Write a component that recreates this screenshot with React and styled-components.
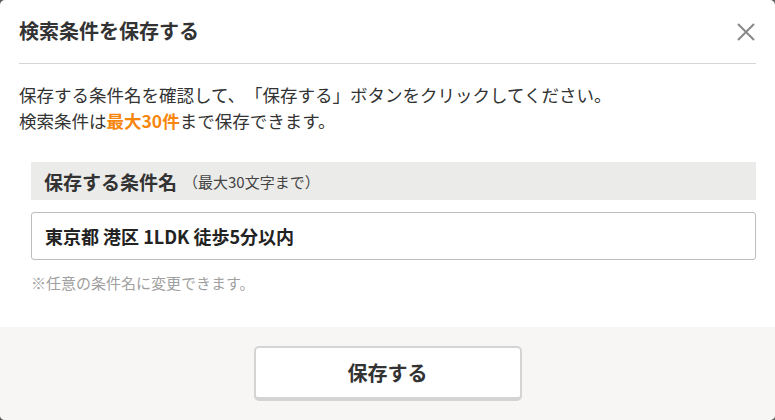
import React from "react";
import styled, { createGlobalStyle } from "styled-components";

const Global = createGlobalStyle`
  html, body { margin: 0; padding: 0; background: #5a5a5a; }
  body { font-family: "Noto Sans CJK JP", "Noto Sans", sans-serif; color: #333; }
  * { box-sizing: border-box; text-spacing-trim: space-all; }
`;

const Modal = styled.div`
  width: 775px;
  height: 420px;
  background: #fff;
  border-radius: 5px;
  overflow: hidden;
  display: flex;
  flex-direction: column;
`;

const Header = styled.div`
  margin: 0 19px;
  height: 64px;
  border-bottom: 1px solid #d6d6d6;
  display: flex;
  align-items: center;
  justify-content: space-between;
`;

const Title = styled.h2`
  margin: 0;
  font-size: 20px;
  font-weight: 700;
  color: #333;
  line-height: 1;
  padding-bottom: 1px;
`;

const Close = styled.button`
  width: 20px;
  height: 20px;
  padding: 0;
  border: none;
  background: none;
  display: flex;
  align-items: center;
  justify-content: center;
  cursor: pointer;
`;

const Body = styled.div`
  padding: 18px 19px 0;
  flex: 1;
`;

const Desc = styled.p`
  margin: 0;
  font-size: 17.5px;
  line-height: 26px;
  color: #333;
`;

const Em = styled.strong`
  color: #f7860e;
  font-weight: 700;
`;

const Field = styled.div`
  margin: 28px 0 0 12px;
`;

const LabelBar = styled.div`
  height: 38px;
  background: #ebebe9;
  display: flex;
  align-items: center;
  padding-left: 13px;
  gap: 6px;
`;

const LabelText = styled.span`
  font-size: 19px;
  font-weight: 700;
  color: #333;
`;

const LabelNote = styled.span`
  font-size: 15px;
  color: #444;
`;

const Input = styled.input`
  display: block;
  width: 100%;
  height: 48px;
  margin-top: 12px;
  border: 1px solid #bdbdbd;
  border-radius: 3px;
  padding: 0 13px;
  font-family: inherit;
  font-size: 18px;
  font-weight: 700;
  color: #222;
  outline: none;
`;

const Hint = styled.p`
  margin: 13px 0 0;
  font-size: 15px;
  line-height: 20px;
  color: #a0a0a0;
`;

const Footer = styled.div`
  height: 93px;
  background: #f7f6f4;
  display: flex;
  justify-content: center;
  padding-top: 19px;
`;

const SaveButton = styled.button`
  width: 268px;
  height: 55px;
  background: #fff;
  border: 2px solid #d4d4d4;
  border-bottom-width: 4px;
  border-radius: 5px;
  font-family: inherit;
  font-size: 20px;
  font-weight: 700;
  color: #333;
  cursor: pointer;
`;

export default function App() {
  return (
    <>
      <Global />
      <Modal>
        <Header>
          <Title>検索条件を保存する</Title>
          <Close aria-label="閉じる">
            <svg width="18" height="18" viewBox="0 0 18 18">
              <path d="M1 1L17 17M17 1L1 17" stroke="#888" strokeWidth="2" />
            </svg>
          </Close>
        </Header>
        <Body>
          <Desc>
            保存する条件名を確認して、「保存する」ボタンをクリックしてください。
            <br />
            検索条件は<Em>最大30件</Em>まで保存できます。
          </Desc>
          <Field>
            <LabelBar>
              <LabelText>保存する条件名</LabelText>
              <LabelNote>（最大30文字まで）</LabelNote>
            </LabelBar>
            <Input defaultValue="東京都 港区 1LDK 徒歩5分以内" />
            <Hint>※任意の条件名に変更できます。</Hint>
          </Field>
        </Body>
        <Footer>
          <SaveButton>保存する</SaveButton>
        </Footer>
      </Modal>
    </>
  );
}
